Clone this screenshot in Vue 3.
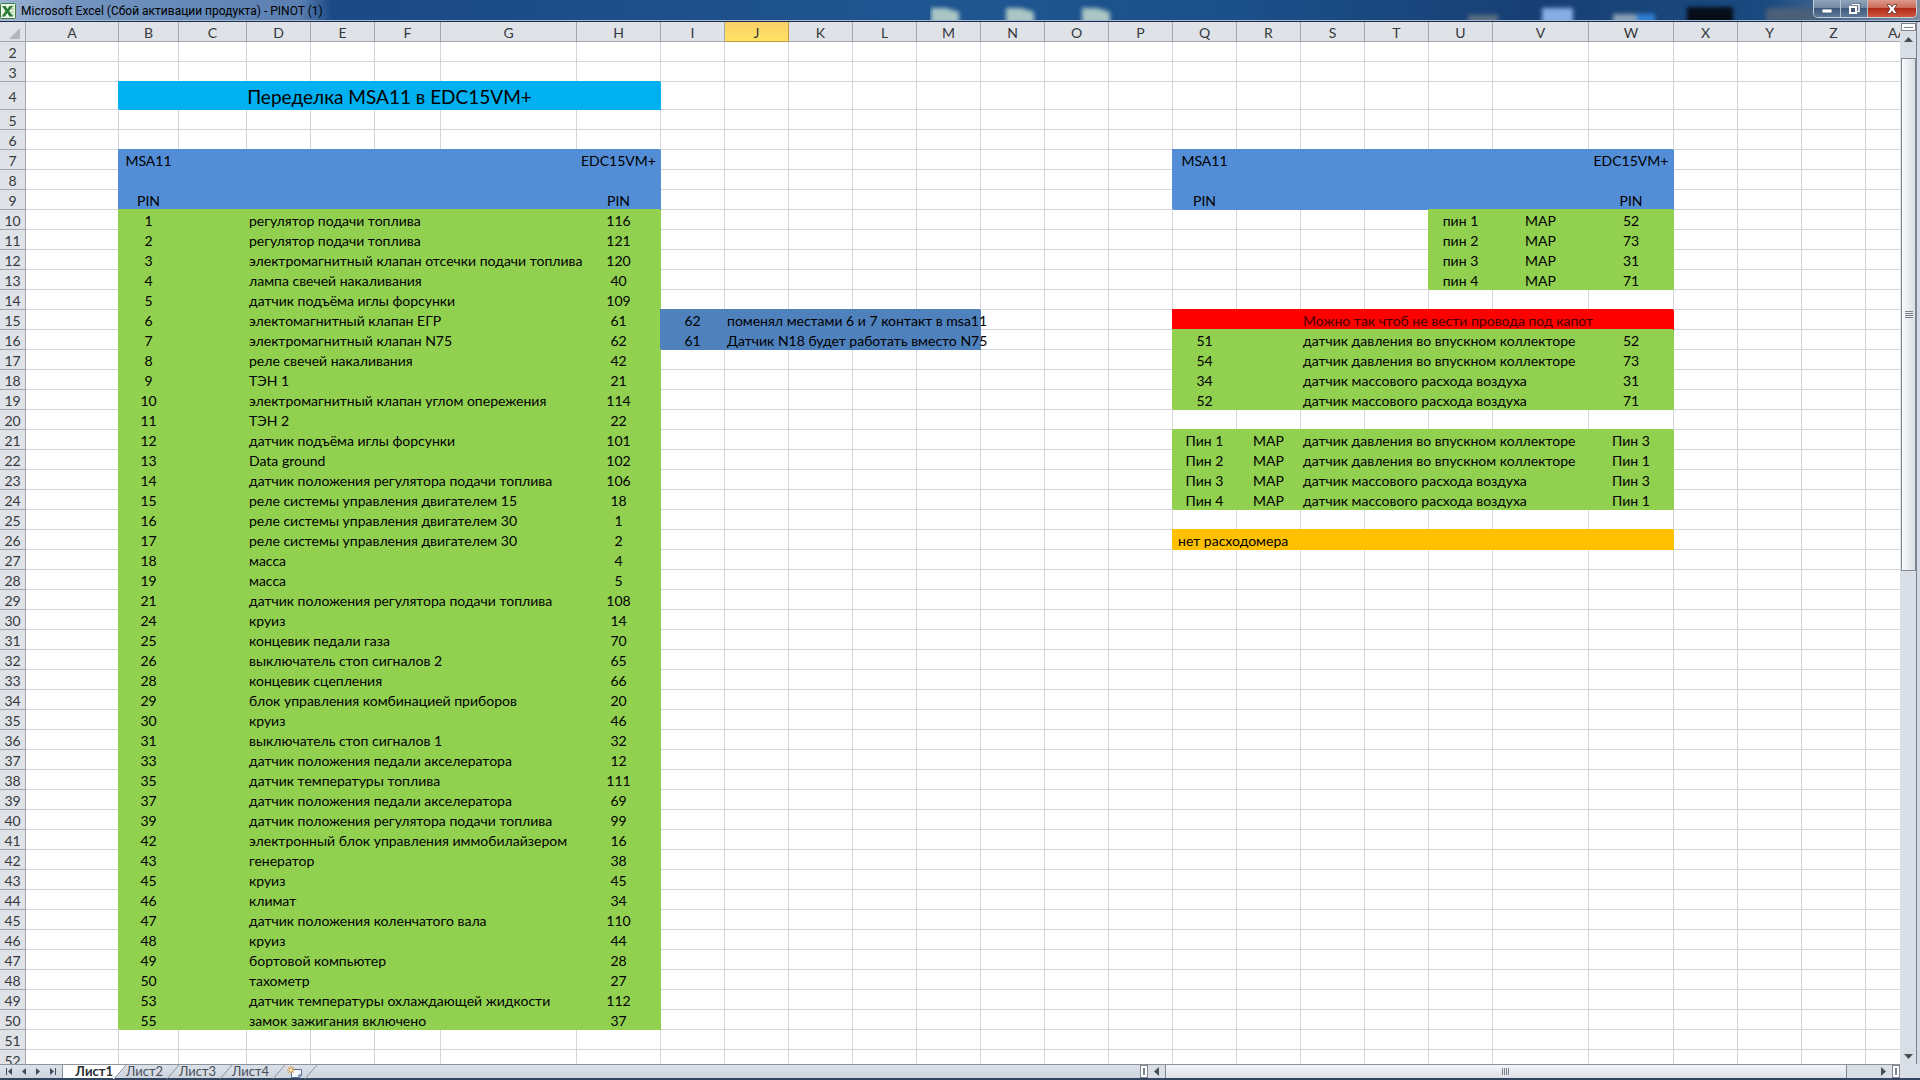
<template>
  <div class="window">
    <header class="titlebar">
      <svg class="titlebar-backdrop" width="990" height="20" viewBox="930 0 990 20" aria-hidden="true">
        <g class="backdrop-shapes">
          <path d="M931 8h15l13 4v12h-28z" fill="#a9c6c4" />
          <path d="M1006 8h15l13 4v12h-28z" fill="#a9c6c4" />
          <path d="M1082 8h15l13 4v12h-28z" fill="#a9c6c4" />
          <rect x="1468" y="15" width="30" height="9" fill="#5d6f80" />
          <rect x="1542" y="8" width="31" height="16" fill="#86aee6" />
          <rect x="1613" y="14" width="24" height="10" fill="#8aa0b4" />
          <rect x="1637" y="14" width="18" height="10" fill="#2f7fd6" />
          <rect x="1687" y="7" width="46" height="18" fill="#070d18" />
          <rect x="1766" y="8" width="60" height="16" fill="#4b5f78" />
        </g>
      </svg>
      <svg class="app-icon" width="16" height="16" viewBox="0 0 16 16" aria-hidden="true">
        <rect x="0.5" y="0.5" width="15" height="15" rx="1" fill="#e9f3e6" stroke="#3c7d3f" />
        <path d="M11 3h3M11 6h3M11 9h3M11 12h3" stroke="#8fbf8b" />
        <path d="M2 3h3.600l1.800 3 2-3H13L9.200 8l4 5.500H9.400L7.200 10 5 13.500H1.600l3.900-5.500z" fill="#2e7d36" />
      </svg>
      <h1 class="title">Microsoft Excel (Сбой активации продукта) - PINOT (1)</h1>
      <div class="window-buttons">
        <button class="win-btn" aria-label="Свернуть">
          <svg width="14" height="12" viewBox="0 0 14 12"><rect x="2" y="6" width="10" height="4" fill="#fff" stroke="#43566e" stroke-width="0.800" /></svg>
        </button>
        <button class="win-btn" aria-label="Восстановить">
          <svg width="14" height="12" viewBox="0 0 14 12">
            <path d="M5 1.500h7v7h-2" fill="none" stroke="#43566e" stroke-width="3" />
            <path d="M5 1.500h7v7h-2" fill="none" stroke="#fff" stroke-width="1.600" />
            <rect x="3" y="4" width="6" height="6" fill="#43566e" stroke="#fff" stroke-width="2" />
          </svg>
        </button>
        <button class="win-btn win-close" aria-label="Закрыть">
          <svg width="14" height="12" viewBox="0 0 14 12">
            <path d="M2 1.500h3.200L7 4l1.800-2.500H12L9 6l3 4.500H8.800L7 8l-1.800 2.500H2L5 6z" fill="#fff" stroke="#5d3238" stroke-width="0.800" />
          </svg>
        </button>
      </div>
    </header>

    <div class="workspace">
      <main class="sheet">
        <table class="grid">
          <colgroup>
            <col class="col-rownum" />
            <col v-for="c in columns" :key="c.name" :style="{ width: c.width + 'px' }" />
          </colgroup>
          <thead>
            <tr>
              <th class="corner">
                <svg width="12" height="11" viewBox="0 0 12 11" aria-hidden="true"><path d="M11 0v11H0z" fill="#b3b7bc" /></svg>
              </th>
              <th v-for="c in columns" :key="c.name" scope="col" :class="{ selected: c.name === 'J' }">{{ c.name }}</th>
            </tr>
          </thead>
          <tbody>
            <tr v-for="row in rows" :key="row.number" :class="{ tall: row.number === 4 }">
              <th scope="row">{{ row.number }}</th>
              <td
                v-for="cell in row.cells"
                :key="cell.name"
                :colspan="cell.span"
                :class="[cell.fill, cell.align]"
              >{{ cell.text }}</td>
            </tr>
          </tbody>
        </table>
      </main>

      <div class="vscroll">
        <div class="split-box split-h"></div>
        <button class="arrow-btn" aria-label="Вверх">
          <svg width="9" height="5" viewBox="0 0 9 5"><path d="M4.500 0L9 5H0z" fill="#4a4e55" /></svg>
        </button>
        <div class="vtrack">
          <div class="vthumb"><i></i><i></i><i></i><i></i></div>
        </div>
        <button class="arrow-btn" aria-label="Вниз">
          <svg width="9" height="5" viewBox="0 0 9 5"><path d="M0 0h9L4.500 5z" fill="#4a4e55" /></svg>
        </button>
      </div>
    </div>

    <footer class="bottombar">
      <nav class="tabs">
        <div class="tab-nav">
          <button aria-label="Первый лист">
            <svg width="8" height="7" viewBox="0 0 8 7"><path d="M1 0h1v7H1zM7 0v7L3 3.500z" /></svg>
          </button>
          <button aria-label="Предыдущий лист">
            <svg width="8" height="7" viewBox="0 0 8 7"><path d="M6 0v7L2 3.500z" /></svg>
          </button>
          <button aria-label="Следующий лист">
            <svg width="8" height="7" viewBox="0 0 8 7"><path d="M2 0v7l4-3.500z" /></svg>
          </button>
          <button aria-label="Последний лист">
            <svg width="8" height="7" viewBox="0 0 8 7"><path d="M6 0h1v7H6zM1 0v7l4-3.500z" /></svg>
          </button>
        </div>
        <template v-for="(tab, i) in tabs" :key="tab">
          <button class="tab" :class="{ active: i === 0 }">{{ tab }}</button>
          <svg class="slant" width="13" height="14" viewBox="0 0 13 14" aria-hidden="true">
            <path v-if="i === 0" d="M0 0h13L1 14H0z" fill="#fff" />
            <path d="M13 0L1 14" stroke="#8d939c" />
          </svg>
        </template>
        <button class="new-sheet" aria-label="Вставить лист">
          <svg width="16" height="12" viewBox="0 0 16 12">
            <path d="M4.500 3.500h10v6l-2 2h-8z" fill="#f4f7fb" stroke="#5a6f95" />
            <path d="M14.500 8.500l-3 3v-3z" fill="#4f6490" />
            <path d="M4 0v8M0 4h8M1.200 1.200l5.600 5.600M6.800 1.200L1.200 6.800" stroke="#d88a2a" />
            <circle cx="4" cy="4" r="1.500" fill="#fff1b8" />
          </svg>
        </button>
        <svg class="slant" width="13" height="14" viewBox="0 0 13 14" aria-hidden="true">
          <path d="M13 0L1 14" stroke="#8d939c" />
        </svg>
      </nav>
      <div class="hscroll">
        <div class="split-box split-v"></div>
        <button class="arrow-btn" aria-label="Влево">
          <svg width="5" height="9" viewBox="0 0 5 9"><path d="M5 0v9L0 4.500z" fill="#4a4e55" /></svg>
        </button>
        <div class="htrack">
          <div class="hthumb"><i></i><i></i><i></i><i></i></div>
        </div>
        <button class="arrow-btn" aria-label="Вправо">
          <svg width="5" height="9" viewBox="0 0 5 9"><path d="M0 0v9l5-4.500z" fill="#4a4e55" /></svg>
        </button>
        <div class="split-box split-v"></div>
      </div>
    </footer>
  </div>
</template>

<script setup>
const widths = {
  A: 93, B: 60, C: 68, D: 64, E: 64, F: 66, G: 136, H: 84, V: 96, W: 85
};
const names = [...'ABCDEFGHIJKLMNOPQRSTUVWXYZ', 'AA'];
const columns = names.map((name) => ({ name, width: widths[name] || 64 }));

const tabs = ['Лист1', 'Лист2', 'Лист3', 'Лист4'];

// [first row, last row, first column, last column, class]
const fills = [
  [4, 4, 'B', 'H', 'sky'],
  [7, 9, 'B', 'H', 'blue'],
  [10, 50, 'B', 'H', 'green'],
  [15, 16, 'I', 'M', 'steel'],
  [7, 9, 'Q', 'W', 'blue'],
  [10, 13, 'U', 'W', 'green'],
  [15, 15, 'Q', 'W', 'red'],
  [16, 19, 'Q', 'W', 'green'],
  [21, 24, 'Q', 'W', 'green'],
  [26, 26, 'Q', 'W', 'orange']
];

// pins from row 10 down: MSA11, description, EDC15VM+
const pins = [
  [1, 'регулятор подачи топлива', 116],
  [2, 'регулятор подачи топлива', 121],
  [3, 'электромагнитный клапан отсечки подачи топлива', 120],
  [4, 'лампа свечей накаливания', 40],
  [5, 'датчик подъёма иглы форсунки', 109],
  [6, 'электомагнитный клапан ЕГР', 61],
  [7, 'электромагнитный клапан N75', 62],
  [8, 'реле свечей накаливания', 42],
  [9, 'ТЭН 1', 21],
  [10, 'электромагнитный клапан углом опережения', 114],
  [11, 'ТЭН 2', 22],
  [12, 'датчик подъёма иглы форсунки', 101],
  [13, 'Data ground', 102],
  [14, 'датчик положения регулятора подачи топлива', 106],
  [15, 'реле системы управления двигателем 15', 18],
  [16, 'реле системы управления двигателем 30', 1],
  [17, 'реле системы управления двигателем 30', 2],
  [18, 'масса', 4],
  [19, 'масса', 5],
  [21, 'датчик положения регулятора подачи топлива', 108],
  [24, 'круиз', 14],
  [25, 'концевик педали газа', 70],
  [26, 'выключатель стоп сигналов 2', 65],
  [28, 'концевик сцепления', 66],
  [29, 'блок управления комбинацией приборов', 20],
  [30, 'круиз', 46],
  [31, 'выключатель стоп сигналов 1', 32],
  [33, 'датчик положения педали акселератора', 12],
  [35, 'датчик температуры топлива', 111],
  [37, 'датчик положения педали акселератора', 69],
  [39, 'датчик положения регулятора подачи топлива', 99],
  [42, 'электронный блок управления иммобилайзером', 16],
  [43, 'генератор', 38],
  [45, 'круиз', 45],
  [46, 'климат', 34],
  [47, 'датчик положения коленчатого вала', 110],
  [48, 'круиз', 44],
  [49, 'бортовой компьютер', 28],
  [50, 'тахометр', 27],
  [53, 'датчик температуры охлаждающей жидкости', 112],
  [55, 'замок зажигания включено', 37]
];

const pressure = 'датчик давления во впускном коллекторе';
const airflow = 'датчик массового расхода воздуха';

const values = {
  B4: 'Переделка MSA11 в EDC15VM+',
  B7: 'MSA11', H7: 'EDC15VM+', B9: 'PIN', H9: 'PIN',
  I15: 62, J15: 'поменял местами 6 и 7 контакт в msa11',
  I16: 61, J16: 'Датчик N18 будет работать вместо N75',
  Q7: 'MSA11', W7: 'EDC15VM+', Q9: 'PIN', W9: 'PIN',
  U10: 'пин 1', V10: 'MAP', W10: 52,
  U11: 'пин 2', V11: 'MAP', W11: 73,
  U12: 'пин 3', V12: 'MAP', W12: 31,
  U13: 'пин 4', V13: 'MAP', W13: 71,
  S15: 'Можно так чтоб не вести провода под капот',
  Q16: 51, S16: pressure, W16: 52,
  Q17: 54, S17: pressure, W17: 73,
  Q18: 34, S18: airflow, W18: 31,
  Q19: 52, S19: airflow, W19: 71,
  Q21: 'Пин 1', R21: 'MAP', S21: pressure, W21: 'Пин 3',
  Q22: 'Пин 2', R22: 'MAP', S22: pressure, W22: 'Пин 1',
  Q23: 'Пин 3', R23: 'MAP', S23: airflow, W23: 'Пин 3',
  Q24: 'Пин 4', R24: 'MAP', S24: airflow, W24: 'Пин 1',
  Q26: 'нет расходомера'
};
pins.forEach(([from, label, to], i) => {
  values['B' + (10 + i)] = from;
  values['D' + (10 + i)] = label;
  values['H' + (10 + i)] = to;
});

const merged = { B4: 7, Q26: 7 };

const fillOf = (row, col) => {
  const hit = fills.find(([r1, r2, c1, c2]) =>
    row >= r1 && row <= r2 && col >= names.indexOf(c1) && col <= names.indexOf(c2));
  return hit ? hit[4] : '';
};

const alignOf = (name) => {
  if (name === 'Q26') return 'indent';
  return 'DJS'.includes(name[0]) ? 'left' : 'center';
};

const buildRow = (number) => {
  const cells = [];
  for (let col = 0; col < names.length;) {
    const name = names[col] + number;
    const span = merged[name] || 1;
    cells.push({ name, span, text: values[name], fill: fillOf(number, col), align: alignOf(name) });
    col += span;
  }
  return { number, cells };
};

const rows = Array.from({ length: 51 }, (_, i) => buildRow(i + 2));
</script>

<style>
body {
  margin: 0;
  overflow: hidden;
}
</style>

<style scoped>
.window {
  height: 100vh;
  display: flex;
  flex-direction: column;
  overflow: hidden;
  background: #dde1e8;
  font-family: Lato, "Open Sans", sans-serif;
  font-size: 14px;
  color: #000;
}

button {
  display: flex;
  align-items: center;
  justify-content: center;
  margin: 0;
  padding: 0;
  border: none;
  background: transparent;
  font: inherit;
  color: inherit;
}

svg {
  flex: none;
}

/* title bar */
.titlebar {
  position: relative;
  flex: none;
  display: flex;
  align-items: center;
  gap: 5px;
  height: 22px;
  box-sizing: border-box;
  padding-right: 3px;
  border-bottom: 1px solid #1b2c4c;
  box-shadow: inset 0 -1px 0 #a9bad0;
  background:
    linear-gradient(90deg, rgba(200, 215, 235, 0.75) 0, rgba(150, 178, 214, 0.7) 80px, rgba(130, 162, 204, 0.6) 300px, transparent 332px),
    linear-gradient(90deg, #1d4a88 0, #1b4a87 400px, #1f5691 50%, #1b4f89 65%, #173f74 80%, #1a4a80 92%, #7d8da0 100%);
}

.titlebar-backdrop {
  position: absolute;
  top: 0;
  right: 0;
}

.backdrop-shapes {
  filter: blur(2px);
}

.title {
  flex: 1;
  margin: 0;
  font-family: Roboto, "Open Sans", sans-serif;
  font-size: 12px;
  font-weight: 400;
  line-height: 20px;
  white-space: nowrap;
}

.window-buttons {
  position: relative;
  display: flex;
  align-self: flex-start;
  height: 18px;
  box-sizing: border-box;
  border: 1px solid #c3cfdd;
  border-top: none;
  border-radius: 0 0 5px 5px;
  overflow: hidden;
}

.win-btn {
  width: 27px;
  border-right: 1px solid #b6c3d3;
  background: linear-gradient(#8fa3ba 0, #7389a4 45%, #3f5a7c 50%, #5d7899 100%);
}

.win-close {
  width: 48px;
  border-right: none;
  background: linear-gradient(#dc9a8c 0, #cc6a58 45%, #b02a16 50%, #d0583f 100%);
}

/* grid */
.workspace {
  flex: 1;
  min-height: 0;
  display: flex;
}

.sheet {
  flex: 1;
  min-width: 0;
  overflow: hidden;
  background: #fff;
}

.grid {
  width: 0;
  table-layout: fixed;
  border-collapse: separate;
  border-spacing: 0;
}

.col-rownum {
  width: 26px;
}

.grid th,
.grid td {
  height: 20px;
  box-sizing: border-box;
  padding: 2px 0 0;
  border-right: 1px solid #d3d5dc;
  border-bottom: 1px solid #d3d5dc;
  line-height: 17px;
  white-space: nowrap;
  text-align: center;
}

.grid th {
  border-color: #a3a8af;
  background: #dfe2e7;
  color: #35383d;
  font-weight: 400;
}

.grid th.selected {
  border-color: #c09a3c;
  background: linear-gradient(#f9d168, #ffe263);
}

.grid th.corner {
  padding: 4px 4px 0 0;
  line-height: 0;
  text-align: right;
}

.grid .tall th,
.grid .tall td {
  height: 28px;
}

.grid .tall td {
  font-size: 19px;
  line-height: 25px;
}

.grid td.left {
  padding-left: 2px;
  text-align: left;
}

.grid td.indent {
  padding-left: 5px;
  text-align: left;
}

/* fills also cover the grid line above and to the left */
.grid td.sky {
  background: #00b0f0;
  border-color: #00b0f0;
  box-shadow: -1px -1px 0 #00b0f0;
}

.grid td.blue {
  background: #538dd5;
  border-color: #538dd5;
  box-shadow: -1px -1px 0 #538dd5;
}

.grid td.green {
  background: #92d050;
  border-color: #92d050;
  box-shadow: -1px -1px 0 #92d050;
}

.grid td.steel {
  background: #4f81bd;
  border-color: #4f81bd;
  box-shadow: -1px -1px 0 #4f81bd;
}

.grid td.red {
  background: #f00;
  border-color: #f00;
  box-shadow: -1px -1px 0 #f00;
  color: #480000;
}

.grid td.orange {
  background: #ffc000;
  border-color: #ffc000;
  box-shadow: -1px -1px 0 #ffc000;
}

/* scroll bars */
.vscroll {
  flex: none;
  width: 20px;
  box-sizing: border-box;
  display: flex;
  flex-direction: column;
  padding: 1px 1px 0;
  border-right: 3px solid #d5dbe6;
  background: linear-gradient(90deg, #d9dee7 16px, #7c828c 16px);
}

.split-box {
  flex: none;
  box-sizing: border-box;
  border: 1px solid #7f858e;
  background: #fff;
}

.split-h {
  height: 8px;
  box-shadow: inset 0 0 0 2px #fff, inset 0 -3px 0 #7f858e;
}

.arrow-btn {
  flex: none;
}

.vscroll .arrow-btn {
  height: 16px;
}

.vtrack {
  flex: 1;
  display: grid;
  grid-template-rows: 11fr 514fr 477fr;
}

.vthumb {
  grid-row: 2;
  display: flex;
  flex-direction: column;
  align-items: center;
  justify-content: center;
  gap: 1px;
  border: 1px solid #84888f;
  background: linear-gradient(90deg, #fafbfc, #d9dde4);
}

.vthumb i {
  width: 8px;
  height: 1px;
  background: #7d828a;
}

.bottombar {
  flex: none;
  display: flex;
  height: 16px;
  box-sizing: border-box;
  padding-right: 20px;
  border-bottom: 2px solid #31455f;
  background: #d9dee7;
}

.tabs {
  flex: 1;
  display: flex;
  border-top: 1px solid #8d939c;
  background: linear-gradient(#dce1e9, #cdd5df);
}

.tab-nav {
  display: flex;
  width: 63px;
  box-sizing: border-box;
  justify-content: space-around;
  padding: 0 2px;
  border-right: 1px solid #8d939c;
  fill: #3f4a5a;
}

.tab {
  width: 40px;
  justify-content: flex-start;
  font-size: 13px;
  line-height: 13px;
  color: #4a4f57;
}

.tab.active {
  width: 50px;
  justify-content: flex-end;
  background: #fff;
  font-weight: 700;
  color: #2b2e33;
}

.new-sheet {
  width: 19px;
}

.hscroll {
  flex: 0 0 40%;
  display: flex;
  border-top: 1px solid #8d939c;
}

.hscroll .arrow-btn {
  width: 17px;
}

.split-v {
  width: 8px;
  box-shadow: inset 0 0 0 2px #fff, inset 4px 0 0 #7f858e;
}

.htrack {
  flex: 1;
  background: #dadee5;
}

.hthumb {
  width: 96%;
  height: 100%;
  box-sizing: border-box;
  display: flex;
  align-items: center;
  justify-content: center;
  gap: 1px;
  border: solid #7f858e;
  border-width: 0 1px;
  background: linear-gradient(#f3f5f8, #dce1e8);
}

.hthumb i {
  width: 1px;
  height: 7px;
  background: #7d828a;
}
</style>
